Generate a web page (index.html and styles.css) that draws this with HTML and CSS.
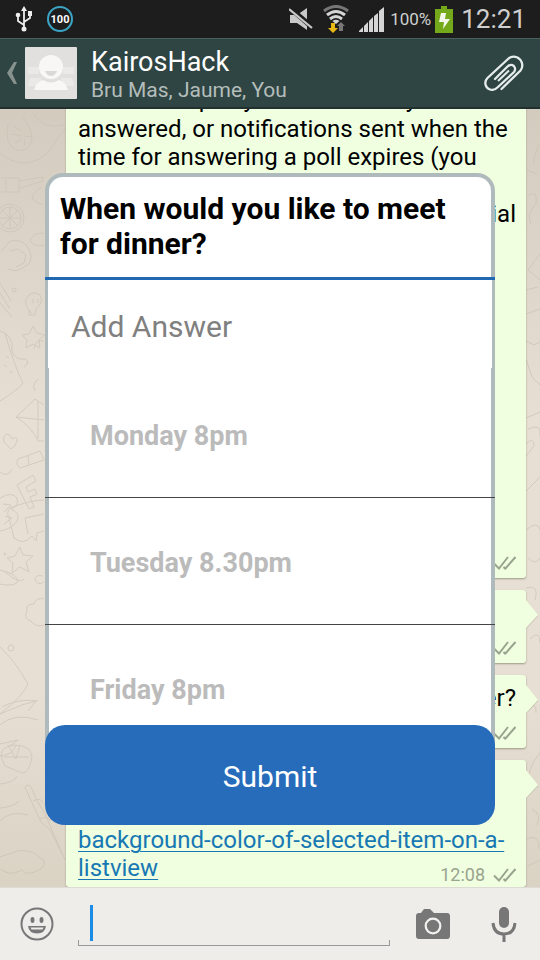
FILE: index.html
```html
<!DOCTYPE html>
<html lang="en">
<head>
<meta charset="utf-8">
<meta name="viewport" content="width=device-width, initial-scale=1">
<title>KairosHack</title>
<link rel="stylesheet" href="styles.css">
</head>
<body>
<svg width="0" height="0" class="defs" aria-hidden="true">
  <symbol id="ticks" viewBox="0 0 24 16">
    <path d="M1 8.500l5 5L15 2M12 14L22.500 2M10.500 12l2 2" fill="none" stroke="currentColor" stroke-width="2"/>
  </symbol>
</svg>
<div class="phone">
  <div class="status">
    <svg class="status__usb" width="18" height="26" viewBox="0 0 18 26" aria-hidden="true">
      <path d="M9 3v20M9 19L3 15V10M9 16l6-4V9" fill="none" stroke="#eee" stroke-width="1.800"/>
      <path d="M9 0l3 5H6z" fill="#eee"/><circle cx="9" cy="23" r="2.500" fill="#eee"/>
      <circle cx="3" cy="9" r="2.300" fill="#eee"/><path d="M13 5h4v5h-4z" fill="#eee"/>
    </svg>
    <span class="status__level">100</span>
    <svg class="status__mute" width="24" height="24" viewBox="0 0 24 24" aria-hidden="true">
      <path d="M1 8h7l10-7v22L8 16H1z" fill="#c9c9c9"/>
      <path d="M1 1l22 19" stroke="#1d1d1d" stroke-width="5"/>
      <path d="M0 2l23 19" stroke="#c9c9c9" stroke-width="2.200"/>
    </svg>
    <svg class="status__wifi" width="26" height="28" viewBox="0 0 26 28" aria-hidden="true">
      <path d="M1 6q12-9 24 0" fill="none" stroke="#777" stroke-width="3"/>
      <path d="M4 10q9-7 18 0M7 14q6-5 12 0" fill="none" stroke="#d5d5d5" stroke-width="3"/>
      <path d="M9.500 16q3.500-2.500 7 0L13 19z" fill="#d5d5d5"/>
      <path d="M8 18h4v5h3l-5 5-5-5h3z" fill="#e9b812"/>
      <path d="M16 26v-5h-2l4-4 4 4h-2v5z" fill="#777"/>
    </svg>
    <svg class="status__signal" width="26" height="25" viewBox="0 0 26 25" aria-hidden="true">
      <path d="M0 25v-1l4-4v5zM5 25v-6l4-4v10zM10 25V14l4-4v15zM15 25V9l4-3v19zM20 25V4l5-4v25z" fill="#d5d5d5"/>
    </svg>
    <span class="status__percent">100%</span>
    <svg class="status__battery" width="18" height="27" viewBox="0 0 18 27" aria-hidden="true">
      <path d="M0 3h6V0h6v3h6v24H0z" fill="#74a91b"/>
      <path d="M6 7h5l-1 6h5L8 23l1-7H4z" fill="#f4f8ea"/>
    </svg>
    <span class="status__clock">12:21</span>
  </div>

  <header class="bar">
    <button class="bar__back" aria-label="Back">
      <svg width="12" height="24" viewBox="0 0 12 24"><path d="M8 1h3L6 12l5 11H8L1 12z" fill="#87928f"/></svg>
    </button>
    <svg class="bar__avatar" width="52" height="52" viewBox="0 0 52 52" aria-hidden="true">
      <rect width="52" height="52" rx="1" fill="#e2e0df"/>
      <path d="M3 20h11v7H3zM38 20h11v7H38zM5 31h11v8H3zM36 31h11l2 8H38z" fill="#ebe9e8"/>
      <circle cx="26" cy="20" r="12" fill="#f8f7f6"/>
      <path d="M9 43q2-8 9-10 8 5 16 0 7 2 9 10z" fill="#f8f7f6"/>
      <path d="M20 24h12q-2 5-6 5t-6-5z" fill="#dbd9d8"/>
    </svg>
    <div class="bar__names">
      <h1 class="bar__title">KairosHack</h1>
      <p class="bar__people">Bru Mas, Jaume, You</p>
    </div>
    <button class="bar__attach" aria-label="Attach">
      <svg width="40" height="36" viewBox="0 0 40 36">
        <path d="M17.500 34L36.500 15.500C40 11 38 5 33.500 2.500 30 1 27 1 24 4L3.500 23C-.5 27 1.500 33 6 34.500 9 35.500 12 34 14 32L30 17C32 14.500 31 10.500 28 10 26 9.500 24.500 10.500 23 12L11 24" fill="none" stroke="#e6ecec" stroke-width="2.300" stroke-linecap="round"/>
        <path d="M14 26l11-10.500" stroke="#e6ecec" stroke-width="2" fill="none"/>
      </svg>
    </button>
  </header>

  <main class="chat">
    <svg class="doodles doodles--left" width="66" height="779" viewBox="0 0 66 779" aria-hidden="true">
      <path d="M0 44q8 8 22 10 20 0 30-16T66 20M8 15q-4 20 8 26 12 3 16-10 0-12-10-24M13 17l9 5M12 25l9 2M14 34l8-4M24 38l1-8M32 28l-8-1M34 6q10 15 30 10M1 69h18v14H1M19 72l24-4v4L20 79M6 70v12M42 78q-10 6-10 12 5 5 11 5M44 124q-12 0-14 8 5 6 14 4M2 142l8-10q14-3 20 10 4 12-6 16-8 6-16 2M10 142l8-2 8 6-2 8-8 4M0 184l10 16M0 194l12 14M0 174l11 18M32 204q-8-6-6-14 6-10 14-4 4 8-4 14l-1 6h-6v-5M33 190v4M38 190v4M33 217l4 7 8 2-6 5 1 8-7-4-7 4 1-8-5-5 7-1zM0 222q14 4 12 20 4 10 14 8 4 4-2 8M5 224q10 35 18 50-4 6-23 18M44 232q-9-2-10 8M6 247l3 2M4 256l3 2M10 262l3 2M39 270q-8 4-4 12M16 308l19-18 9 6M16 308q16 10 22 24h6M16 308l28 3M38 292v38M4 333q-2-7 4-8 3 2 4 5 5-4 5 2-1 5-6 8zM18 350l22-8 4 9-24 8q-5-4-2-9zM28 347l1 9M0 363q8 6 12-3M17 376l16-10 3 6-10 6 2 5 7-3 2 5-7 3 4 10-5 2zM0 389q12-7 17 0 2 8-6 11 10 5 6 12-5 8-17 10M3 395l8 1-7 7M5 407l7 2-8 6M44 391q-13 0-34 8-4 4-1 10l5 20q10 8 18-2l4 5 1-8 7-2M44 405l-19 4 3 16M20 438l3 8 10 1-7 6 3 10-9-5-8 6 1-10-6-5 8-2zM0 461q18 4 18 12-6 5-18 2M4 462q16 14 20 8M43 467q-8-2-8 4 3 6 9 2M44 490q-8-2-10 5-9 0-7 7-4 8 4 10 5 7 13 4M0 538q16 15 28 37-5 12-28 30M2 598q16-9 36-6M0 605l22-9 14-4-8 10M0 616q15-13 38-5M0 635l18-4-8 6M0 647q12-1 16-10M2 650q-4-12 12-14 17 0 18 12-3 17-10 16l-17-7zM8 636l8 14M20 636l-4 14M4 648h25M0 675q14-1 17-8M0 699q13-1 19-7M0 712q10-11 28-6M25 678q4-5 7 2l4 10 9 15 6 14 14 32M25 678l8 18 8 17 9 8 12 24M33 692q8-4 10 2M40 710q8-4 10 2M0 748l17-6q15-2 22 6 10 4 2 12-14 8-19 1Q9 768 1 760"/>
      <circle cx="10" cy="109" r="14"/><circle cx="10" cy="109" r="11"/><path d="M10 98v22M0 109h21M2 101l16 16M18 101L2 117"/>
      <circle cx="14" cy="181" r="2"/><circle cx="11" cy="539" r="3"/><circle cx="5" cy="445" r="1"/>
    </svg>
    <svg class="doodles doodles--right" width="14" height="779" viewBox="0 0 14 779" aria-hidden="true">
      <path d="M14 35q-6 8-6 20M1 61l10 4M2 87q10-8 8 8-10 10-5 20M14 145L2 161l12 10M0 181l12-3M0 205l14-5M0 232l8 4 6-3M0 250l6 18 8 8M0 309l14-6M2 320q14-6 12 6M0 335q8-8 8 2l-8 10M14 368L0 382M0 421q12-10 14 0M2 449q8 8 12 0M0 479q14-4 9 12M4 530q10-10 10 4M2 600q9-8 8 4M14 644Q0 660 4 674M6 700q10 5 5 16M0 730q14-6 13 10M2 757l12-6"/>
    </svg>

    <article class="bubble bubble--long">
      <div class="bubble__text">
        <p>when each poll you sent already</p>
        <p>answered, or notifications sent when the</p>
        <p>time for answering a poll expires (you</p>
        <p class="bubble__end">social</p>
      </div>
      <p class="bubble__meta"><svg width="24" height="16"><use href="#ticks"/></svg></p>
    </article>
    <article class="bubble">
      <svg class="bubble__tail" width="13" height="28" viewBox="0 0 13 28" aria-hidden="true"><path d="M0 0v28L12 15z"/></svg>
      <p class="bubble__meta"><svg width="24" height="16"><use href="#ticks"/></svg></p>
    </article>
    <article class="bubble">
      <svg class="bubble__tail" width="13" height="28" viewBox="0 0 13 28" aria-hidden="true"><path d="M0 0v28L12 15z"/></svg>
      <p class="bubble__text bubble__end">dinner?</p>
      <p class="bubble__meta"><svg width="24" height="16"><use href="#ticks"/></svg></p>
    </article>
    <article class="bubble bubble--last">
      <svg class="bubble__tail" width="13" height="28" viewBox="0 0 13 28" aria-hidden="true"><path d="M0 0v28L12 15z"/></svg>
      <p class="bubble__text"><a href="#listview">background-color-of-selected-item-on-a-<br>listview</a></p>
      <p class="bubble__meta">12:08 <svg width="24" height="16"><use href="#ticks"/></svg></p>
    </article>

    <form class="poll" onsubmit="return false">
      <h2 class="poll__title">When would you like to meet for dinner?</h2>
      <hr class="poll__rule">
      <input class="poll__add" type="text" placeholder="Add Answer" aria-label="Add Answer">
      <ul class="poll__list">
        <li>Monday 8pm</li>
        <li>Tuesday 8.30pm</li>
        <li>Friday 8pm</li>
      </ul>
      <button class="poll__submit">Submit</button>
    </form>
  </main>

  <footer class="composer">
    <button aria-label="Emoji">
      <svg width="34" height="34" viewBox="0 0 34 34">
        <circle cx="17" cy="17" r="15.500" fill="none" stroke="#777" stroke-width="2"/>
        <ellipse cx="12.500" cy="13" rx="2" ry="3" fill="#777"/><ellipse cx="21.500" cy="13" rx="2" ry="3" fill="#777"/>
        <path d="M8 19h18q-1 7.500-9 7.500T8 19z" fill="#777"/><path d="M10.500 20.500h13l-1 2h-11z" fill="#efedea"/>
      </svg>
    </button>
    <div class="composer__field">
      <input type="text" aria-label="Message">
      <span class="composer__caret"></span>
    </div>
    <button aria-label="Camera">
      <svg width="34" height="30" viewBox="0 0 34 30">
        <path d="M3 4h2l3-4h6l4 4h13q3 0 3 3v20q0 3-3 3H3q-3 0-3-3V7q0-3 3-3z" fill="#777"/>
        <circle cx="17" cy="17" r="7.300" fill="#777" stroke="#f4f2f0" stroke-width="2.200"/>
      </svg>
    </button>
    <button aria-label="Voice message">
      <svg width="26" height="35" viewBox="0 0 26 35">
        <rect x="8" y="0" width="10" height="21" rx="5" fill="#777"/>
        <path d="M2 16q1 11 11 11t11-11M13 27v8" fill="none" stroke="#777" stroke-width="3"/>
      </svg>
    </button>
  </footer>
</div>
</body>
</html>
```
FILE: styles.css
```css
* {
  box-sizing: border-box;
}

body,
h1,
h2,
p,
ul {
  margin: 0;
  padding: 0;
}

body {
  font-family: Roboto, "Liberation Sans", sans-serif;
}

button {
  padding: 0;
  border: 0;
  background: none;
  font: inherit;
}

svg {
  display: block;
  flex: none;
}

.defs {
  position: absolute;
}

.phone {
  display: flex;
  flex-direction: column;
  height: 100vh;
  overflow: hidden;
}

/* Status bar */
.status {
  display: flex;
  align-items: center;
  flex: none;
  height: 38px;
  padding: 0 14px 0 15px;
  background: #1d1d1d;
  color: #cfcfcf;
}

.status__level {
  display: grid;
  place-items: center;
  width: 26px;
  height: 26px;
  margin-left: 14px;
  border: 2px solid #3ba5c6;
  border-radius: 50%;
  color: #fff;
  font-size: 11px;
  font-weight: 700;
}

.status__mute {
  margin-left: auto;
}

.status__wifi {
  margin-left: 10px;
}

.status__signal {
  margin-left: 10px;
}

.status__percent {
  margin-left: 5px;
  font-size: 17px;
}

.status__battery {
  margin: 0 8px 0 4px;
}

.status__clock {
  font-size: 26px;
}

/* Conversation header */
.bar {
  display: flex;
  align-items: center;
  flex: none;
  height: 71px;
  padding: 0 16px 0 6px;
  border-top: 1px solid #49605c;
  border-bottom: 2px solid #22312f;
  background: #2f4543;
}

.bar__avatar {
  margin-left: 7px;
}

.bar__names {
  flex: 1;
  margin-left: 14px;
  padding-top: 4px;
}

.bar__title {
  color: #fff;
  font-size: 27px;
  font-weight: 400;
  line-height: 30px;
}

.bar__people {
  color: #b4bdbb;
  font-size: 21px;
  line-height: 26px;
}

/* Conversation */
.chat {
  position: relative;
  display: flex;
  flex: 1;
  flex-direction: column;
  justify-content: flex-end;
  gap: 12px;
  min-height: 0;
  padding: 0 14px 0 66px;
  overflow: hidden;
  background: linear-gradient(#d4cbbf, #e7dfd4 40%, #e7dfd4 75%, #dad2c3);
}

.doodles {
  position: absolute;
  top: 0;
  fill: none;
  stroke: #cabfb2;
  stroke-width: 1;
  opacity: 0.65;
}

.doodles--left {
  left: 0;
}

.doodles--right {
  right: 0;
}

.bubble {
  position: relative;
  display: flex;
  flex: none;
  flex-direction: column;
  min-height: 73px;
  padding: 9px 10px 6px 12px;
  border-radius: 3px;
  background: #efffe0;
  box-shadow: 0 1px 2px #9b9a85;
}

.bubble--long {
  min-height: 501px;
  padding-top: 8px;
}

.bubble--last {
  min-height: 127px;
  padding-bottom: 5px;
  justify-content: flex-end;
}

.bubble__text {
  color: #000;
  font-size: 24px;
  line-height: 28px;
  white-space: nowrap;
}

.bubble--long p:first-child {
  margin-bottom: 2px;
}

.bubble--long .bubble__end {
  margin-top: 29px;
}

.bubble__end {
  text-align: right;
}

.bubble__text a {
  color: #1878b4;
  text-decoration-thickness: 1px;
  text-underline-offset: 3px;
}

.bubble__meta {
  position: absolute;
  right: 9px;
  bottom: 7px;
  display: flex;
  align-items: center;
  gap: 8px;
  color: #9aa38d;
  font-size: 18px;
  line-height: 18px;
}

.bubble--last .bubble__meta {
  bottom: 3px;
}

.bubble__tail {
  position: absolute;
  top: 10px;
  left: 100%;
  fill: #efffe0;
  filter: drop-shadow(0 1px 0 #c2bda9);
}

/* Poll dialog */
.poll {
  position: absolute;
  top: 64px;
  right: 45px;
  left: 45px;
  display: flex;
  flex-direction: column;
}

.poll__title {
  padding: 14px 11px 16px;
  border: 4px solid #aebabb;
  border-bottom: 0;
  border-radius: 18px 18px 0 0;
  background: #fff;
  color: #000;
  font-size: 30px;
  line-height: 35px;
}

.poll__rule {
  width: 100%;
  height: 3px;
  margin: 0;
  border: 0;
  background: #2168b2;
}

.poll__add {
  width: 100%;
  height: 88px;
  padding: 4px 23px 0;
  border: 0 solid #aebabb;
  border-width: 0 3px;
  border-radius: 0;
  outline: 0;
  background: #fff;
  color: #000;
  font: 30px Roboto, "Liberation Sans", sans-serif;
}

.poll__add::placeholder {
  color: #808080;
  opacity: 1;
}

.poll__list {
  padding-top: 3px;
  background: linear-gradient(90deg, #aebabb 4px, #fff 4px calc(100% - 4px), #aebabb calc(100% - 4px));
  list-style: none;
}

.poll__list li {
  display: flex;
  align-items: center;
  height: 127px;
  padding: 3px 45px 0;
  border-bottom: 1px solid #454545;
  color: #bbb;
  font-size: 27px;
  font-weight: 700;
}

.poll__submit {
  position: relative;
  height: 100px;
  margin-top: -27px;
  padding-top: 3px;
  border-radius: 20px;
  background: #266cba;
  color: #fff;
  font-size: 30px;
}

/* Message composer */
.composer {
  display: flex;
  align-items: center;
  flex: none;
  height: 73px;
  padding: 0 23px 0 20px;
  border-top: 1px solid #dedbd6;
  background: #efedea;
}

.composer button {
  flex: none;
}

.composer__field {
  position: relative;
  flex: 1;
  margin: 0 26px 0 24px;
}

.composer__field input {
  display: block;
  width: 100%;
  height: 44px;
  padding: 0 12px;
  border: 0;
  outline: 0;
  background:
    linear-gradient(#999, #999) 0 100% / 100% 1px no-repeat,
    linear-gradient(#999, #999) 0 100% / 1px 6px no-repeat,
    linear-gradient(#999, #999) 100% 100% / 1px 6px no-repeat;
  font: 24px Roboto, "Liberation Sans", sans-serif;
}

.composer__caret {
  position: absolute;
  top: 3px;
  left: 12px;
  width: 3px;
  height: 36px;
  background: #1b8de6;
}

.composer button:last-child {
  margin-left: 41px;
}
```
